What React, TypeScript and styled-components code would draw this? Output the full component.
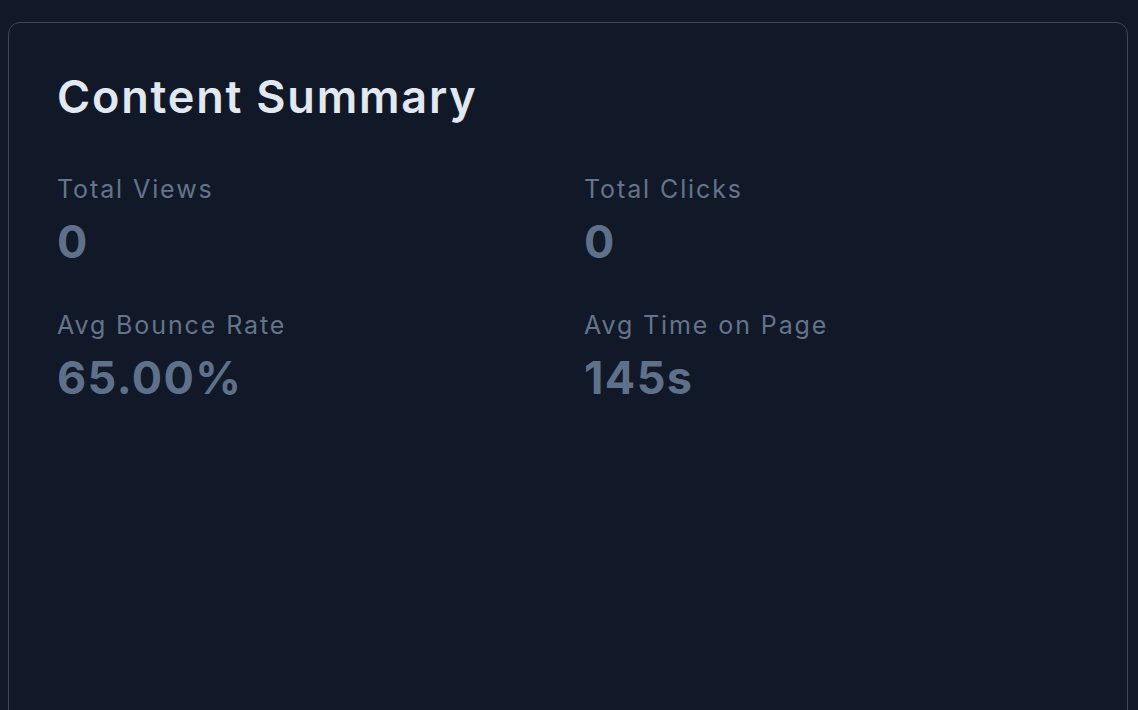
import React from "react";
import styled, { createGlobalStyle } from "styled-components";

const GlobalStyle = createGlobalStyle`
  html, body {
    margin: 0;
    padding: 0;
    background: #111827;
  }
  body {
    font-family: "Inter", "DejaVu Sans", sans-serif;
  }
`;

const Page = styled.div`
  min-height: 100vh;
  padding: 22px 10px 0 8px;
  box-sizing: border-box;
  overflow: hidden;
`;

const Card = styled.section`
  background: #111827;
  border: 1px solid #3b4859;
  border-radius: 12px;
  padding: 50px 48px 0 48px;
  min-height: 760px;
  box-sizing: border-box;
`;

const Title = styled.h2`
  margin: 0;
  font-size: 45px;
  line-height: 48px;
  font-weight: 600;
  color: #e2e8f0;
  letter-spacing: 1.8px;
`;

const Grid = styled.div`
  display: grid;
  grid-template-columns: 1fr 1fr;
  column-gap: 32px;
  row-gap: 43px;
  margin-top: 52px;
`;

const Stat = styled.div`
  display: flex;
  flex-direction: column;
  gap: 13px;
`;

const Label = styled.div`
  font-size: 25px;
  line-height: 32px;
  font-weight: 400;
  color: #64748b;
  letter-spacing: 1.9px;
`;

const Value = styled.div`
  font-size: 45px;
  line-height: 48px;
  font-weight: 700;
  color: #5f708a;
  letter-spacing: 1.4px;
`;

const stats = [
  { label: "Total Views", value: "0" },
  { label: "Total Clicks", value: "0" },
  { label: "Avg Bounce Rate", value: "65.00%" },
  { label: "Avg Time on Page", value: "145s" },
];

const App: React.FC = () => {
  return (
    <>
      <GlobalStyle />
      <Page>
        <Card>
          <Title>Content Summary</Title>
          <Grid>
            {stats.map((s) => (
              <Stat key={s.label}>
                <Label>{s.label}</Label>
                <Value>{s.value}</Value>
              </Stat>
            ))}
          </Grid>
        </Card>
      </Page>
    </>
  );
};

export default App;
